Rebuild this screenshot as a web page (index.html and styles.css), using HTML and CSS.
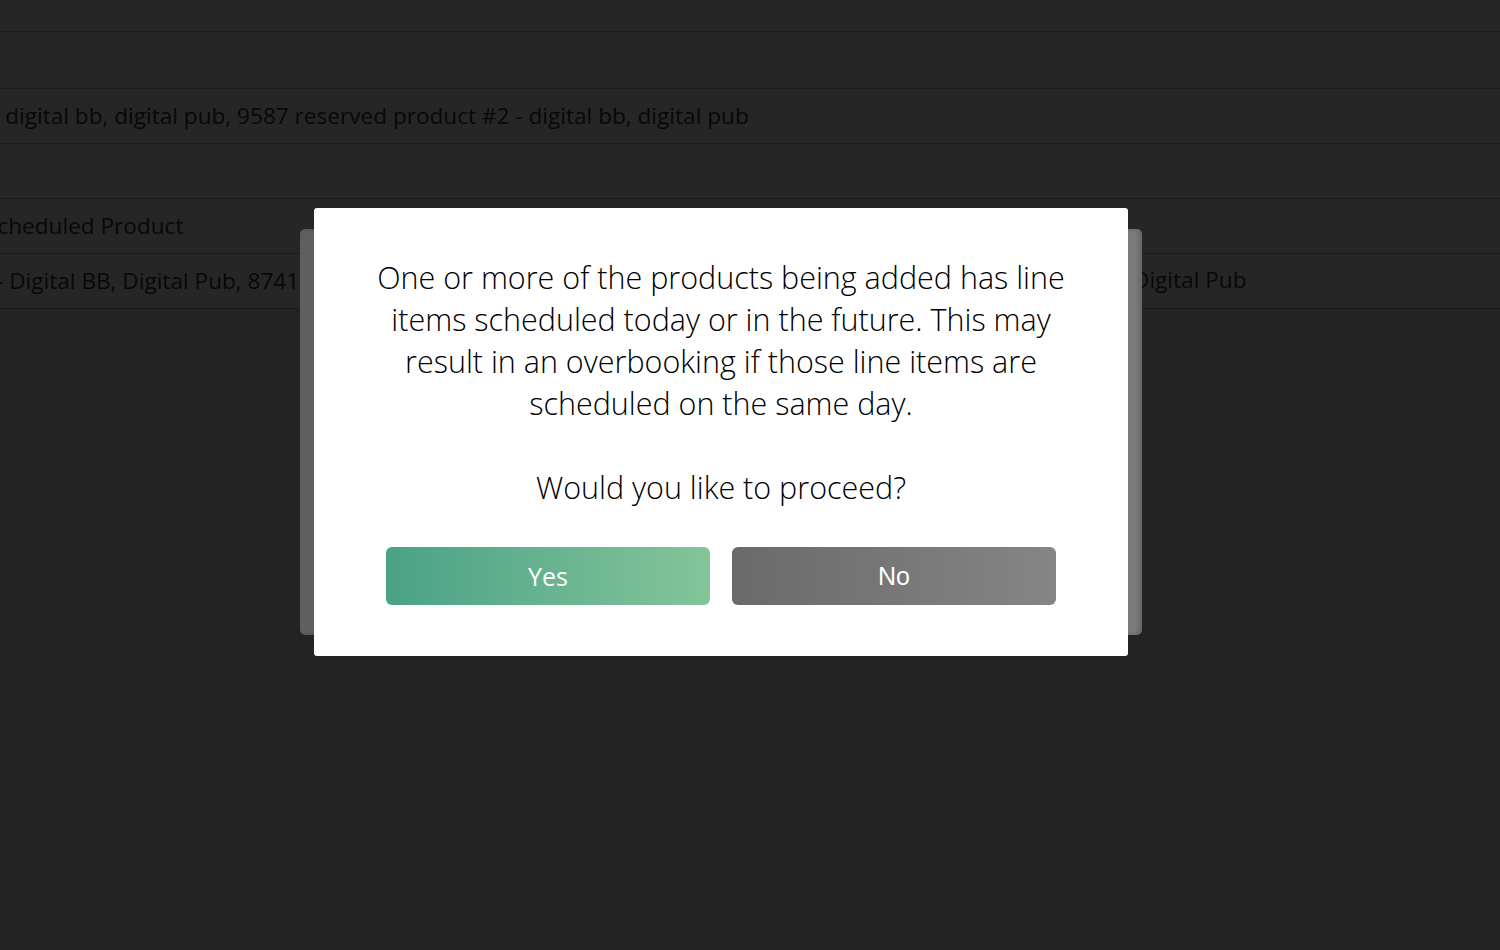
FILE: index.html
```html
<!DOCTYPE html>
<html>
<head>
  <title>Add Products</title>
  <link rel="stylesheet" href="styles.css">
</head>
<body>
  <div class="grid">
    <div class="row top"></div>
    <div class="row tall"></div>
    <div class="row"><span class="cell first">- digital bb, digital pub, 9587 reserved product #2 - digital bb, digital pub</span></div>
    <div class="row"></div>
    <div class="row"><span class="cell cut">Scheduled Product</span></div>
    <div class="row split">
      <span class="cell cut2">- Digital BB, Digital Pub, 8741 reserved product - Digital BB, Digital Pub</span>
      <span class="cell far">Digital Pub</span>
    </div>
  </div>

  <div class="backdrop">
    <div class="panel"></div>
    <div class="dialog">
      <p class="message">
        One or more of the products being added has line items scheduled today or in the future. This may result in an overbooking if those line items are scheduled on the same day.
      </p>
      <p class="message question">Would you like to proceed?</p>
      <div class="actions">
        <button type="button" class="btn yes">Yes</button>
        <button type="button" class="btn no">No</button>
      </div>
    </div>
  </div>
</body>
</html>
```

FILE: styles.css
```css
html, body {
  margin: 0;
  padding: 0;
  height: 100%;
  }
body {
  background: #232323;
  font-family: "Open Sans", "Liberation Sans", sans-serif;
  color: #080808;
  overflow: hidden;
  }
.grid {
  background: #262626;
  }
.row {
  height: 55px;
  padding-bottom: 2px;
  border-bottom: 1px solid #1b1b1b;
  box-sizing: border-box;
  display: flex;
  align-items: center;
  white-space: nowrap;
  overflow: hidden;
  font-size: 22.6px;
  }
.row.top {
  height: 32px;
  }
.row.tall {
  height: 57px;
  }
.cell.first {
  margin-left: -8px;
  }
.cell.cut {
  margin-left: -15px;
  }
.cell.cut2 {
  margin-left: -4px;
  max-width: 1130px;
  overflow: hidden;
  }
.row.split {
  position: relative;
  }
.cell.far {
  position: absolute;
  left: 1133px;
  top: 0;
  line-height: 52px;
  background: #262626;
  padding-right: 40px;
  }
.backdrop {
  position: fixed;
  left: 0;
  top: 0;
  right: 0;
  bottom: 0;
  }
.panel {
  position: absolute;
  left: 300px;
  top: 229px;
  width: 842px;
  height: 406px;
  border-radius: 5px;
  background: linear-gradient(to right, #5f5f5f, #7b7b7b);
  box-shadow: inset -3px 0 4px rgba(0, 0, 0, 0.18);
  }
.dialog {
  position: absolute;
  left: 314px;
  top: 208px;
  width: 814px;
  height: 448px;
  box-sizing: border-box;
  padding: 48px 50px 0;
  background: #ffffff;
  border-radius: 3px;
  text-align: center;
  }
.message {
  margin: 0;
  font-size: 30.5px;
  font-weight: 300;
  line-height: 42px;
  color: #000000;
  }
.message.question {
  margin-top: 42px;
  }
.actions {
  display: flex;
  gap: 22px;
  margin: 39px 22px 0;
  }
.btn {
  flex: 1;
  height: 58px;
  border: none;
  border-radius: 6px;
  color: #ffffff;
  font-size: 25px;
  cursor: pointer;
  }
.btn.yes {
  font-family: "Open Sans", sans-serif;
  background: linear-gradient(to right, #4aa287, #84c499);
  }
.btn.no {
  font-family: "Liberation Sans", Arial, sans-serif;
  background: linear-gradient(to right, #6a6a6a, #858585);
  }
```
